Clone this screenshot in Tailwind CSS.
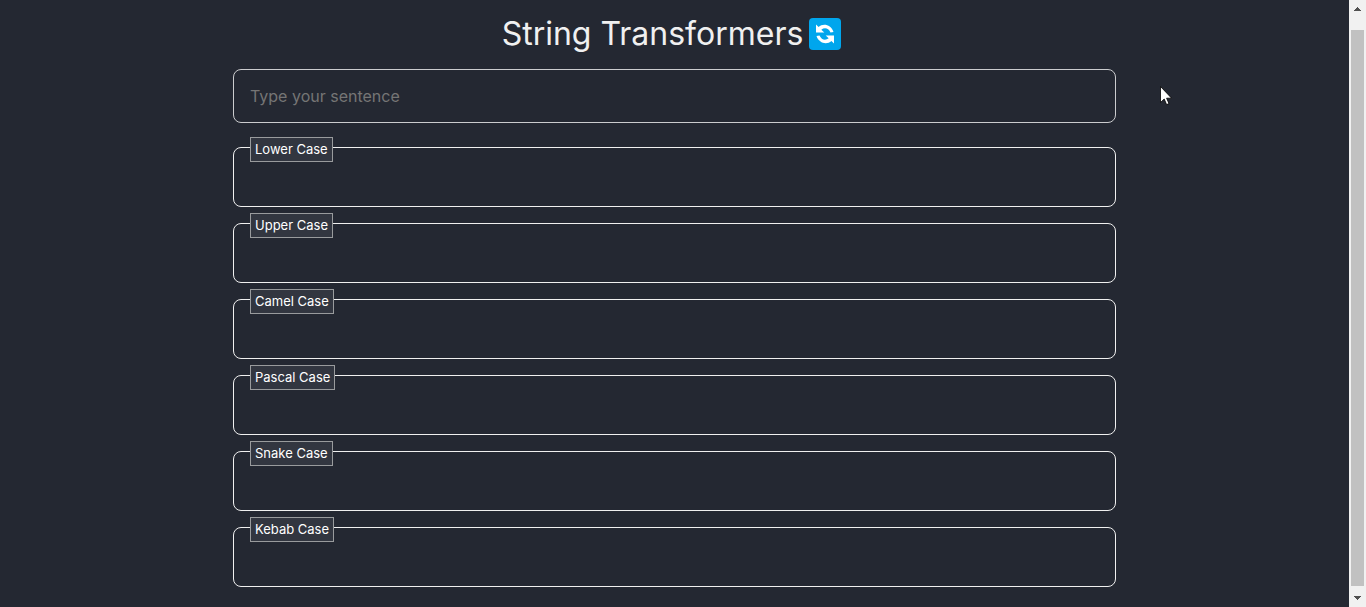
<!DOCTYPE html>
<html lang="en">
<head>
<meta charset="utf-8">
<meta name="viewport" content="width=device-width, initial-scale=1">
<title>String Transformers</title>
<script src="https://cdn.jsdelivr.net/npm/@tailwindcss/browser@4"></script>
</head>
<body class="flex h-screen overflow-hidden bg-[#242832] font-['Inter',sans-serif] text-[#f0f0f0]">
<main class="min-w-0 flex-1 px-4">
  <div class="mx-auto flex w-full max-w-[883px] flex-col">
    <h1 class="flex items-center justify-center gap-1.5 pt-3 pr-1.5 text-[32px] leading-[44px] font-normal">
      String Transformers
      <svg class="size-8" viewBox="0 0 32 32" aria-hidden="true">
        <rect width="32" height="32" rx="4" fill="#00a6ed"/>
        <path fill="#fff" d="M7 6.500l2.600 2.600C14 5 22 6.500 24.500 14L21.500 14.500C19.500 10 15.500 9.300 12.300 11.700L15.300 14.600H7z"/>
        <path fill="#fff" d="M25 25.500l-2.600-2.600C18 27 10 25.500 7.500 18L10.500 17.500C12.500 22 16.500 22.700 19.700 20.300L16.700 17.400H25z"/>
      </svg>
    </h1>
    <input type="text" aria-label="Type your sentence" placeholder="Type your sentence" class="mt-[13px] h-[54px] w-full rounded-lg border border-[#cbccce] bg-transparent px-4 text-base font-normal outline-none placeholder:text-[#757575]">
    <div class="mt-6 flex flex-col gap-4">
      <section class="relative h-[60px] rounded-lg border border-[#f0f0f0]"><h2 class="absolute -top-[11px] left-4 border border-[#999b9d] bg-[#323640] px-1 text-[13px] leading-[23px] font-normal text-white">Lower Case</h2></section>
      <section class="relative h-[60px] rounded-lg border border-[#f0f0f0]"><h2 class="absolute -top-[11px] left-4 border border-[#999b9d] bg-[#323640] px-1 text-[13px] leading-[23px] font-normal text-white">Upper Case</h2></section>
      <section class="relative h-[60px] rounded-lg border border-[#f0f0f0]"><h2 class="absolute -top-[11px] left-4 border border-[#999b9d] bg-[#323640] px-1 text-[13px] leading-[23px] font-normal text-white">Camel Case</h2></section>
      <section class="relative h-[60px] rounded-lg border border-[#f0f0f0]"><h2 class="absolute -top-[11px] left-4 border border-[#999b9d] bg-[#323640] px-1 text-[13px] leading-[23px] font-normal text-white">Pascal Case</h2></section>
      <section class="relative h-[60px] rounded-lg border border-[#f0f0f0]"><h2 class="absolute -top-[11px] left-4 border border-[#999b9d] bg-[#323640] px-1 text-[13px] leading-[23px] font-normal text-white">Snake Case</h2></section>
      <section class="relative h-[60px] rounded-lg border border-[#f0f0f0]"><h2 class="absolute -top-[11px] left-4 border border-[#999b9d] bg-[#323640] px-1 text-[13px] leading-[23px] font-normal text-white">Kebab Case</h2></section>
    </div>
  </div>
</main>
<div class="flex w-[17px] shrink-0 flex-col items-center bg-[#f1f1f1]" aria-hidden="true">
  <svg class="h-[30px] w-[17px] shrink-0" viewBox="0 0 17 30" shape-rendering="crispEdges"><path fill="#505050" d="M8 7h1v1h1v1h1v1h1v1H5v-1h1V9h1V8h1z"/></svg>
  <div class="w-[13px] flex-1 bg-[#c1c1c1]"></div>
  <svg class="h-[21px] w-[17px] shrink-0" viewBox="0 0 17 21" shape-rendering="crispEdges"><path fill="#505050" d="M5 10h7v1h-1v1h-1v1H9v1H8v-1H7v-1H6v-1H5z"/></svg>
</div>
<svg class="pointer-events-none absolute top-[86px] left-[1160px] h-5 w-3" viewBox="0 0 12 20" aria-hidden="true"><path d="M.5 .500v16l3.700-3.500 2.400 5.600 2.400-1-2.400-5.400h5z" fill="#fff" stroke="#000" stroke-width=".8"/></svg>
</body>
</html>
